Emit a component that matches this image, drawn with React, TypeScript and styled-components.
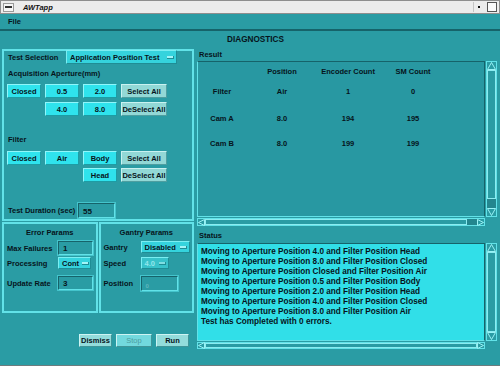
import React from "react";
import styled, { createGlobalStyle } from "styled-components";

const C = {
  teal: "#2a9ca4",
  list: "#2898a2",
  shadow: "#16636a",
  light: "#62e2e8",
  cyan: "#2fe3ed",
  cyanMid: "#35d3dd",
  gray: "#92d8d6",
  text: "#06141b",
  status: "#31dfe8",
};

const GlobalStyle = createGlobalStyle`
  html, body { margin: 0; padding: 0; background: #ffffff; }
  * { box-sizing: border-box; }
  body { font-family: "Liberation Sans", Arial, sans-serif; }
`;

const Window = styled.div`
  width: 500px;
  height: 366px;
  background: ${C.teal};
  display: flex;
  flex-direction: column;
  border-bottom: 1px solid #6d7c7e;
  font-family: "Liberation Sans", Arial, sans-serif;
  font-weight: bold;
  font-size: 7.5px;
  color: ${C.text};
  overflow: hidden;
`;

const TitleBar = styled.div`
  height: 14px;
  background: #ececec;
  border: 1px solid #8e8e8e;
  display: flex;
  align-items: center;
  padding: 0 2px 0 2px;
`;

const WinMenuButton = styled.span`
  width: 11px;
  height: 9px;
  border: 1px solid #9a9a9a;
  background: #f6f6f6;
  display: flex;
  align-items: center;
  justify-content: center;
  &::after {
    content: "";
    width: 7px;
    height: 2px;
    background: #333;
  }
`;

const TitleText = styled.span`
  margin-left: 9px;
  font-style: italic;
  font-size: 7.5px;
  color: #111;
  flex: 1;
`;

const TitleButton = styled.span<{ $box?: boolean }>`
  width: 10px;
  height: 10px;
  margin-left: 4px;
  display: flex;
  align-items: center;
  justify-content: center;
  border: ${(p) => (p.$box ? "1px solid #555" : "none")};
  border-left: ${(p) => (p.$box ? "1px solid #555" : "1px solid #c4c4c4")};
  background: ${(p) => (p.$box ? "#fafafa" : "transparent")};
  &::after {
    content: "";
    display: ${(p) => (p.$box ? "none" : "block")};
    width: 2px;
    height: 2px;
    background: #111;
  }
`;

const MenuBar = styled.div`
  height: 17px;
  border-bottom: 2px solid ${C.shadow};
  display: flex;
  align-items: center;
  padding-left: 8px;
`;

const MenuItem = styled.span`
  font-size: 7.5px;
`;

const Body = styled.div`
  flex: 1;
  display: flex;
  flex-direction: column;
  padding: 0 2px 0 2px;
`;

const Heading = styled.div`
  height: 18px;
  line-height: 18px;
  text-align: center;
  font-size: 8.2px;
  padding-left: 11px;
`;

const Columns = styled.div`
  display: flex;
  gap: 2px;
`;

const LeftColumn = styled.div`
  width: 192px;
  display: flex;
  flex-direction: column;
`;

const RightColumn = styled.div`
  flex: 1;
  display: flex;
  flex-direction: column;
`;

const Panel = styled.div<{ $h: number }>`
  height: ${(p) => p.$h}px;
  border: 2px solid ${C.light};
  display: flex;
  flex-direction: column;
`;

const PanelTitle = styled.div`
  margin-top: 4px;
  height: 10px;
  line-height: 10px;
  text-align: center;
`;

const FieldRow = styled.div<{ $mt: number; $indent: number }>`
  display: flex;
  align-items: center;
  height: 14px;
  margin-top: ${(p) => p.$mt}px;
  padding-left: ${(p) => p.$indent}px;
`;

const Label = styled.span<{ $w: number }>`
  width: ${(p) => p.$w}px;
  flex: none;
  white-space: nowrap;
`;

const Dropdown = styled.div<{ $w: number; $h: number; $disabled?: boolean }>`
  width: ${(p) => p.$w}px;
  height: ${(p) => p.$h}px;
  background: ${(p) => (p.$disabled ? "#38c2ca" : C.cyanMid)};
  color: ${(p) => (p.$disabled ? "#92e6ea" : C.text)};
  border-top: 1px solid #7aeef2;
  border-left: 1px solid #7aeef2;
  border-bottom: 1px solid #1f8d95;
  border-right: 1px solid #1f8d95;
  display: flex;
  align-items: center;
  justify-content: space-between;
  padding: 0 2px 0 3px;
  white-space: nowrap;
`;

const DropDash = styled.span<{ $disabled?: boolean }>`
  flex: none;
  width: 7px;
  height: 3px;
  margin-left: 3px;
  background: ${(p) => (p.$disabled ? "#80dde2" : "#a2f4f7")};
  border-bottom: 1px solid #1f8d95;
  border-right: 1px solid #1f8d95;
`;

const TextField = styled.div<{ $w: number; $h: number; $disabled?: boolean }>`
  width: ${(p) => p.$w}px;
  height: ${(p) => p.$h}px;
  border-top: 1px solid ${C.shadow};
  border-left: 1px solid ${C.shadow};
  border-bottom: 1px solid ${C.light};
  border-right: 1px solid ${C.light};
  outline: 1px solid #44c4cc;
  background: ${C.teal};
  color: ${(p) => (p.$disabled ? "#5fb6bc" : C.text)};
  display: flex;
  align-items: flex-end;
  padding: 0 0 1px 4px;
  font-size: ${(p) => (p.$disabled ? 6 : 8)}px;
`;

const SectionLabel = styled.div<{ $mt: number }>`
  margin-top: ${(p) => p.$mt}px;
  height: 10px;
  line-height: 10px;
  padding-left: 4px;
`;

const ButtonGrid = styled.div<{ $mt: number; $rowGap: number }>`
  display: grid;
  grid-template-columns: 34px 34px 34px 46px;
  grid-auto-rows: 14px;
  column-gap: 4px;
  row-gap: ${(p) => p.$rowGap}px;
  margin-top: ${(p) => p.$mt}px;
  padding-left: 3px;
`;

const ToggleButton = styled.div<{ $col: number }>`
  grid-column: ${(p) => p.$col};
  background: ${C.cyan};
  border-top: 1px solid #8ff6fa;
  border-left: 1px solid #8ff6fa;
  border-bottom: 1px solid #1d9ca4;
  border-right: 1px solid #1d9ca4;
  display: flex;
  align-items: center;
  justify-content: center;
`;

const ActionButton = styled.div<{ $col: number }>`
  grid-column: ${(p) => p.$col};
  background: ${C.gray};
  border-top: 1px solid #c9f2f1;
  border-left: 1px solid #c9f2f1;
  border-bottom: 1px solid #4e9ea0;
  border-right: 1px solid #4e9ea0;
  display: flex;
  align-items: center;
  justify-content: center;
  white-space: nowrap;
`;

const ParamsRow = styled.div`
  display: flex;
  gap: 1px;
  margin-top: 1px;
  height: 91px;
`;

const ParamPanel = styled.div`
  flex: 1;
  border: 2px solid ${C.light};
  display: flex;
  flex-direction: column;
`;

const ButtonBar = styled.div`
  display: flex;
  justify-content: flex-end;
  gap: 4px;
  margin-top: 21px;
  padding-right: 5px;
  height: 13px;
`;

const DialogButton = styled.div<{ $w: number; $disabled?: boolean }>`
  width: ${(p) => p.$w}px;
  background: ${(p) => (p.$disabled ? "#72d9de" : "#93dcdb")};
  color: ${(p) => (p.$disabled ? "#4c9da1" : C.text)};
  border-top: 1px solid #cdf4f3;
  border-left: 1px solid #cdf4f3;
  border-bottom: 1px solid #3f9598;
  border-right: 1px solid #3f9598;
  display: flex;
  align-items: center;
  justify-content: center;
  font-weight: ${(p) => (p.$disabled ? "normal" : "bold")};
`;

const PaneLabel = styled.div<{ $mt: number }>`
  margin-top: ${(p) => p.$mt}px;
  height: 10px;
  line-height: 10px;
  padding-left: 3px;
`;

const ScrollPane = styled.div<{ $h: number; $hs: number; $mt: number }>`
  display: grid;
  grid-template-columns: 288px 11px;
  grid-template-rows: 1fr ${(p) => p.$hs}px;
  column-gap: 1px;
  row-gap: 1px;
  height: ${(p) => p.$h}px;
  margin-top: ${(p) => p.$mt}px;
  margin-left: 1px;
`;

const ListArea = styled.div<{ $bg: string }>`
  grid-column: 1;
  grid-row: 1;
  background: ${(p) => p.$bg};
  border-top: 1px solid ${C.shadow};
  border-left: 1px solid ${C.light};
  border-bottom: 1px solid ${C.light};
  border-right: 1px solid ${C.shadow};
  overflow: hidden;
`;

const Track = styled.div<{ $vertical?: boolean }>`
  grid-column: ${(p) => (p.$vertical ? 2 : 1)};
  grid-row: ${(p) => (p.$vertical ? 1 : 2)};
  background: ${C.teal};
  border: 1px solid ${C.light};
  display: flex;
  flex-direction: ${(p) => (p.$vertical ? "column" : "row")};
  align-items: stretch;
`;

const Thumb = styled.div<{ $grow: number }>`
  flex: ${(p) => p.$grow};
  border: 1px solid #8becf0;
`;

const Trough = styled.div<{ $grow: number }>`
  flex: ${(p) => p.$grow};
  background: #23868e;
`;

const ArrowBox = styled.div<{ $vertical?: boolean }>`
  flex: none;
  width: ${(p) => (p.$vertical ? "auto" : "7px")};
  height: ${(p) => (p.$vertical ? "8px" : "auto")};
  display: flex;
  align-items: center;
  justify-content: center;
`;

const Arrow = ({ dir }: { dir: "up" | "down" | "left" | "right" }) => {
  const pts = {
    up: "4.5,0.5 8.5,7.5 0.5,7.5",
    down: "0.5,0.5 8.5,0.5 4.5,7.5",
    left: "0.5,3.5 6.5,0.5 6.5,6.5",
    right: "0.5,0.5 6.5,3.5 0.5,6.5",
  }[dir];
  const vertical = dir === "up" || dir === "down";
  return (
    <ArrowBox $vertical={vertical}>
      <svg width={vertical ? 9 : 7} height={vertical ? 8 : 7}>
        <polygon points={pts} fill="#2a9ca4" stroke="#9af2f5" strokeWidth="1" />
      </svg>
    </ArrowBox>
  );
};

const VScroll = ({ thumb, trough }: { thumb: number; trough: number }) => (
  <Track $vertical>
    <Arrow dir="up" />
    <Thumb $grow={thumb} />
    <Trough $grow={trough} />
    <Arrow dir="down" />
  </Track>
);

const HScroll = ({ thumb, trough }: { thumb: number; trough: number }) => (
  <Track>
    <Arrow dir="left" />
    <Thumb $grow={thumb} />
    <Trough $grow={trough} />
    <Arrow dir="right" />
  </Track>
);

const TableRow = styled.div<{ $mt: number }>`
  display: grid;
  grid-template-columns: 48px 72px 60px 70px;
  margin-top: ${(p) => p.$mt}px;
  height: 10px;
  line-height: 10px;
  text-align: center;
`;

const StatusText = styled.div`
  padding: 3px 3px;
  font-size: 8.2px;
  line-height: 10px;
  white-space: nowrap;
`;

const tableRows: { mt: number; cells: string[] }[] = [
  { mt: 5, cells: ["", "Position", "Encoder Count", "SM Count"] },
  { mt: 10, cells: ["Filter", "Air", "1", "0"] },
  { mt: 17, cells: ["Cam A", "8.0", "194", "195"] },
  { mt: 15, cells: ["Cam B", "8.0", "199", "199"] },
];

const statusLines = [
  "Moving to Aperture Position 4.0 and Filter Position Head",
  "Moving to Aperture Position 8.0 and Filter Position Closed",
  "Moving to Aperture Position Closed and Filter Position Air",
  "Moving to Aperture Position 0.5 and Filter Position Body",
  "Moving to Aperture Position 2.0 and Filter Position Head",
  "Moving to Aperture Position 4.0 and Filter Position Closed",
  "Moving to Aperture Position 8.0 and Filter Position Air",
  "Test has Completed with 0 errors.",
];

export default function App() {
  return (
    <>
      <GlobalStyle />
      <Window>
        <TitleBar>
          <WinMenuButton />
          <TitleText>AWTapp</TitleText>
          <TitleButton />
          <TitleButton $box />
        </TitleBar>
        <MenuBar>
          <MenuItem>File</MenuItem>
        </MenuBar>
        <Body>
          <Heading>DIAGNOSTICS</Heading>
          <Columns>
            <LeftColumn>
              <Panel $h={172}>
                <FieldRow $mt={-1} $indent={4}>
                  <Label $w={58}>Test Selection</Label>
                  <Dropdown $w={111} $h={14}>
                    Application Position Test
                    <DropDash />
                  </Dropdown>
                </FieldRow>
                <SectionLabel $mt={5}>Acquisition Aperture(mm)</SectionLabel>
                <ButtonGrid $mt={5} $rowGap={4}>
                  <ToggleButton $col={1}>Closed</ToggleButton>
                  <ToggleButton $col={2}>0.5</ToggleButton>
                  <ToggleButton $col={3}>2.0</ToggleButton>
                  <ActionButton $col={4}>Select All</ActionButton>
                  <ToggleButton $col={2}>4.0</ToggleButton>
                  <ToggleButton $col={3}>8.0</ToggleButton>
                  <ActionButton $col={4}>DeSelect All</ActionButton>
                </ButtonGrid>
                <SectionLabel $mt={19}>Filter</SectionLabel>
                <ButtonGrid $mt={6} $rowGap={3}>
                  <ToggleButton $col={1}>Closed</ToggleButton>
                  <ToggleButton $col={2}>Air</ToggleButton>
                  <ToggleButton $col={3}>Body</ToggleButton>
                  <ActionButton $col={4}>Select All</ActionButton>
                  <ToggleButton $col={3}>Head</ToggleButton>
                  <ActionButton $col={4}>DeSelect All</ActionButton>
                </ButtonGrid>
                <FieldRow $mt={21} $indent={4}>
                  <Label $w={70}>Test Duration (sec)</Label>
                  <TextField $w={37} $h={15}>55</TextField>
                </FieldRow>
              </Panel>
              <ParamsRow>
                <ParamPanel>
                  <PanelTitle>Error Params</PanelTitle>
                  <FieldRow $mt={3} $indent={3}>
                    <Label $w={51}>Max Failures</Label>
                    <TextField $w={35} $h={14}>1</TextField>
                  </FieldRow>
                  <FieldRow $mt={1} $indent={3}>
                    <Label $w={51}>Processing</Label>
                    <Dropdown $w={33} $h={12}>
                      Cont
                      <DropDash />
                    </Dropdown>
                  </FieldRow>
                  <FieldRow $mt={6} $indent={3}>
                    <Label $w={51}>Update Rate</Label>
                    <TextField $w={35} $h={14}>3</TextField>
                  </FieldRow>
                </ParamPanel>
                <ParamPanel>
                  <PanelTitle>Gantry Params</PanelTitle>
                  <FieldRow $mt={2} $indent={3}>
                    <Label $w={37}>Gantry</Label>
                    <Dropdown $w={49} $h={12}>
                      Disabled
                      <DropDash />
                    </Dropdown>
                  </FieldRow>
                  <FieldRow $mt={2} $indent={3}>
                    <Label $w={37}>Speed</Label>
                    <Dropdown $w={28} $h={12} $disabled>
                      4.0
                      <DropDash $disabled />
                    </Dropdown>
                  </FieldRow>
                  <FieldRow $mt={6} $indent={3}>
                    <Label $w={37}>Position</Label>
                    <TextField $w={37} $h={15} $disabled>
                      0
                    </TextField>
                  </FieldRow>
                </ParamPanel>
              </ParamsRow>
              <ButtonBar>
                <DialogButton $w={33}>Dismiss</DialogButton>
                <DialogButton $w={36} $disabled>
                  Stop
                </DialogButton>
                <DialogButton $w={33}>Run</DialogButton>
              </ButtonBar>
            </LeftColumn>
            <RightColumn>
              <PaneLabel $mt={1}>Result</PaneLabel>
              <ScrollPane $h={165} $hs={8} $mt={1}>
                <ListArea $bg={C.list}>
                  {tableRows.map((r, i) => (
                    <TableRow key={i} $mt={r.mt}>
                      {r.cells.map((c, j) => (
                        <span key={j}>{c}</span>
                      ))}
                    </TableRow>
                  ))}
                </ListArea>
                <VScroll thumb={14} trough={1} />
                <HScroll thumb={26} trough={1} />
              </ScrollPane>
              <PaneLabel $mt={5}>Status</PaneLabel>
              <ScrollPane $h={106} $hs={7} $mt={2}>
                <ListArea $bg={C.status}>
                  <StatusText>
                    {statusLines.map((l, i) => (
                      <div key={i}>{l}</div>
                    ))}
                  </StatusText>
                </ListArea>
                <VScroll thumb={8} trough={0} />
                <HScroll thumb={30} trough={0} />
              </ScrollPane>
            </RightColumn>
          </Columns>
        </Body>
      </Window>
    </>
  );
}
